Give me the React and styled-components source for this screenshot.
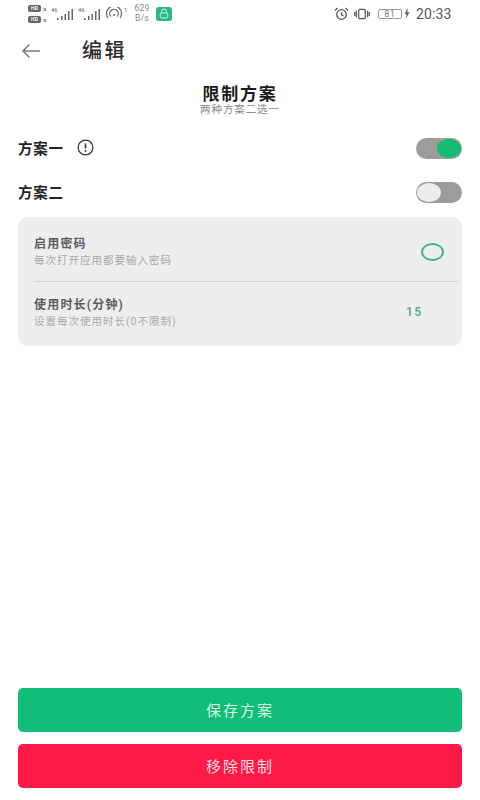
import React from 'react';
import styled, { createGlobalStyle } from 'styled-components';

const GlobalStyle = createGlobalStyle`
  html, body { margin: 0; padding: 0; background: #fff; }
  body { font-family: "Roboto", "Noto Sans CJK SC", sans-serif; }
  * { box-sizing: border-box; }
`;

const Page = styled.div`
  width: 480px;
  height: 800px;
  display: flex;
  flex-direction: column;
  overflow: hidden;
  background: #fff;
  font-family: "Roboto", "Noto Sans CJK SC", sans-serif;
`;

const StatusBar = styled.div`
  height: 27px;
  padding: 0 28px 0 28px;
  display: flex;
  align-items: center;
  justify-content: space-between;
  color: #555;
`;

const StatusGroup = styled.div`
  display: flex;
  align-items: center;
  gap: ${p => p.$gap || 4}px;
`;

const SimStack = styled.div`
  display: flex;
  flex-direction: column;
  gap: 4px;
`;

const SimRow = styled.div`
  display: flex;
  align-items: center;
  gap: 2px;
`;

const HdBadge = styled.span`
  width: 13px;
  height: 7px;
  border-radius: 2px;
  background: #666;
  color: #fff;
  font-size: 5px;
  line-height: 7px;
  font-weight: 700;
  text-align: center;
`;

const SimNum = styled.span`
  width: 4px;
  font-size: 6px;
  line-height: 7px;
  color: #666;
`;

const Speed = styled.div`
  width: 20px;
  font-size: 8.5px;
  line-height: 9.5px;
  letter-spacing: 0.2px;
  text-align: center;
  color: #888;
`;

const Clock = styled.span`
  width: 36px;
  margin-left: 1px;
  font-size: 14px;
  letter-spacing: 0.1px;
  white-space: nowrap;
  color: #555;
`;

const Battery = styled.span`
  width: 24px;
  height: 10px;
  margin: 0 -3px 0 3px;
  border: 1px solid #999;
  border-radius: 2px;
  font-size: 8.5px;
  line-height: 8px;
  letter-spacing: 0.8px;
  text-align: center;
  color: #777;
`;

const Toolbar = styled.div`
  height: 48px;
  padding-left: 21px;
  display: flex;
  align-items: center;
`;

const BackButton = styled.div`
  width: 61px;
  display: flex;
  align-items: center;
`;

const ToolbarTitle = styled.h1`
  margin: 0;
  font-size: 20px;
  line-height: 48px;
  font-weight: 500;
  letter-spacing: 2.5px;
  color: #2b2b2b;
`;

const Heading = styled.div`
  margin-top: 11px;
  text-align: center;
`;

const HeadingTitle = styled.div`
  font-size: 17px;
  line-height: 17px;
  font-weight: 700;
  letter-spacing: 1.7px;
  color: #1a1a1a;
`;

const HeadingSub = styled.div`
  margin-top: 1px;
  font-size: 10.5px;
  line-height: 11px;
  letter-spacing: 0.9px;
  color: #888;
`;

const PlanList = styled.div`
  margin-top: 11px;
`;

const PlanRow = styled.div`
  height: 44px;
  padding: 0 18px;
  display: flex;
  align-items: center;
  justify-content: space-between;
`;

const PlanLabel = styled.div`
  padding-bottom: 2px;
  display: flex;
  align-items: center;
  gap: 13px;
  font-size: 14.5px;
  font-weight: 700;
  letter-spacing: 0.8px;
  color: #262626;
`;

const Toggle = styled.div`
  width: 46px;
  height: 21px;
  padding: 1px;
  border-radius: 11px;
  background: #9c9c9c;
  display: flex;
  justify-content: ${p => (p.$on ? 'flex-end' : 'flex-start')};
`;

const Knob = styled.div`
  width: 24px;
  height: 19px;
  border-radius: 50%;
  background: ${p => (p.$on ? '#12bd77' : '#ececec')};
`;

const Card = styled.div`
  margin: 3px 18px 0;
  height: 129px;
  padding-left: 16px;
  border-radius: 10px;
  background: #eeeeee;
  display: flex;
  flex-direction: column;
`;

const CardRow = styled.div`
  height: ${p => p.$height}px;
  padding-top: ${p => p.$top || 0}px;
  padding-bottom: ${p => p.$bottom || 0}px;
  padding-right: 14px;
  margin-right: 4px;
  display: flex;
  align-items: center;
  justify-content: space-between;
  & + & {
    border-top: 1px solid #d6d6d6;
  }
`;

const RowText = styled.div`
  display: flex;
  flex-direction: column;
  gap: 3px;
`;

const RowTitle = styled.div`
  font-size: 12px;
  line-height: 14px;
  font-weight: 700;
  letter-spacing: 1.2px;
  color: #5c5c5c;
`;

const RowSub = styled.div`
  font-size: 10.5px;
  line-height: 13px;
  letter-spacing: 1px;
  color: #a8a8a8;
`;

const RadioMark = styled.div`
  width: 23px;
  height: 18px;
  border: 2px solid #3fb58c;
  border-radius: 50%;
`;

const RowValue = styled.div`
  width: 38px;
  margin-bottom: 2px;
  font-size: 12px;
  font-weight: 500;
  letter-spacing: 1.4px;
  color: #3fa983;
`;

const Footer = styled.div`
  margin-top: auto;
  padding: 0 18px 12px;
  display: flex;
  flex-direction: column;
  gap: 12px;
`;

const ActionButton = styled.button`
  width: 100%;
  height: 44px;
  padding: 0 0 2px;
  border: 0;
  border-radius: 5px;
  background: ${p => p.$color};
  color: rgba(255, 255, 255, 0.85);
  font-family: inherit;
  font-size: 15px;
  letter-spacing: 2px;
`;

const SignalIcon = () => (
  <svg width="23" height="16" viewBox="0 0 23 16">
    <text x="0" y="6" fontSize="6" fill="#666" fontFamily="Roboto">46</text>
    <g fill="#666">
      <rect x="6" y="12" width="1.5" height="2" />
      <rect x="10" y="10" width="1.5" height="4" />
      <rect x="13.5" y="8" width="1.5" height="6" />
      <rect x="17" y="5" width="1.5" height="9" />
      <rect x="20.5" y="3" width="1.5" height="11" />
    </g>
  </svg>
);

const HotspotIcon = () => (
  <svg width="23" height="14" viewBox="0 0 23 14" fill="none" stroke="#666" strokeWidth="1.2">
    <path d="M3 11 A7.5 7.5 0 1 1 15 11" />
    <path d="M5.8 9.5 A4.3 4.3 0 1 1 12.2 9.5" />
    <circle cx="9" cy="8" r="1" fill="#666" stroke="none" />
    <text x="19" y="5" fontSize="6" fill="#666" stroke="none" fontFamily="Roboto">1</text>
  </svg>
);

const LockBadge = () => (
  <svg width="16" height="14" viewBox="0 0 16 14">
    <rect width="16" height="14" rx="3" fill="#25b888" />
    <path d="M5.5 6 V4.5 a2.5 2.5 0 0 1 5 0 V6" fill="none" stroke="#dff5ec" strokeWidth="1" />
    <rect x="4.2" y="6" width="7.6" height="5" rx="1.5" fill="none" stroke="#dff5ec" strokeWidth="1" />
  </svg>
);

const AlarmIcon = () => (
  <svg width="15" height="14" viewBox="0 0 15 14" fill="none" stroke="#555" strokeWidth="1.3">
    <circle cx="7.5" cy="7.5" r="4.8" />
    <path d="M7.5 5v2.7l2 1.2M1 3.5 3.5 1M14 3.5 11.5 1" />
  </svg>
);

const VibrateIcon = () => (
  <svg width="16" height="12" viewBox="0 0 17 12" fill="none" stroke="#555" strokeWidth="1.3">
    <rect x="5" y="1" width="7" height="10" rx="1" />
    <path d="M2.5 2.5v7M14.5 2.5v7M0.7 4v4M16.3 4v4" />
  </svg>
);

const ChargeIcon = () => (
  <svg width="6" height="11" viewBox="0 0 6 11">
    <path d="M3.6 0 0.5 6.2h2L1.8 11 5.5 4.3h-2z" fill="#666" />
  </svg>
);

const BackIcon = () => (
  <svg width="20" height="16" viewBox="0 0 20 16" fill="none" stroke="#777" strokeWidth="1.5">
    <path d="M19 8H2M8.5 1.5 2 8l6.5 6.5" />
  </svg>
);

const InfoIcon = () => (
  <svg width="17" height="17" viewBox="0 0 17 17" fill="none" stroke="#333" strokeWidth="1.2">
    <circle cx="8.5" cy="8.5" r="7.4" />
    <path d="M8.5 4.4v5.2" strokeWidth="1.5" />
    <circle cx="8.5" cy="12" r="0.9" fill="#333" stroke="none" />
  </svg>
);

export default function App() {
  return (
    <Page>
      <GlobalStyle />
      <StatusBar>
        <StatusGroup $gap={4}>
          <SimStack>
            <SimRow><HdBadge>HD</HdBadge><SimNum>a</SimNum></SimRow>
            <SimRow><HdBadge>HD</HdBadge><SimNum>a</SimNum></SimRow>
          </SimStack>
          <SignalIcon />
          <SignalIcon />
          <HotspotIcon />
          <Speed>629<br />B/s</Speed>
          <LockBadge />
        </StatusGroup>
        <StatusGroup $gap={5}>
          <AlarmIcon />
          <VibrateIcon />
          <Battery>81</Battery>
          <ChargeIcon />
          <Clock>20:33</Clock>
        </StatusGroup>
      </StatusBar>

      <Toolbar>
        <BackButton><BackIcon /></BackButton>
        <ToolbarTitle>编辑</ToolbarTitle>
      </Toolbar>

      <Heading>
        <HeadingTitle>限制方案</HeadingTitle>
        <HeadingSub>两种方案二选一</HeadingSub>
      </Heading>

      <PlanList>
        <PlanRow>
          <PlanLabel>方案一 <InfoIcon /></PlanLabel>
          <Toggle $on><Knob $on /></Toggle>
        </PlanRow>
        <PlanRow>
          <PlanLabel>方案二</PlanLabel>
          <Toggle><Knob /></Toggle>
        </PlanRow>
      </PlanList>

      <Card>
        <CardRow $height={64} $top={6}>
          <RowText>
            <RowTitle>启用密码</RowTitle>
            <RowSub>每次打开应用都要输入密码</RowSub>
          </RowText>
          <RadioMark />
        </CardRow>
        <CardRow $height={65} $bottom={2}>
          <RowText>
            <RowTitle>使用时长(分钟)</RowTitle>
            <RowSub>设置每次使用时长(0不限制)</RowSub>
          </RowText>
          <RowValue>15</RowValue>
        </CardRow>
      </Card>

      <Footer>
        <ActionButton $color="#12bd77">保存方案</ActionButton>
        <ActionButton $color="#fe1a46">移除限制</ActionButton>
      </Footer>
    </Page>
  );
}
